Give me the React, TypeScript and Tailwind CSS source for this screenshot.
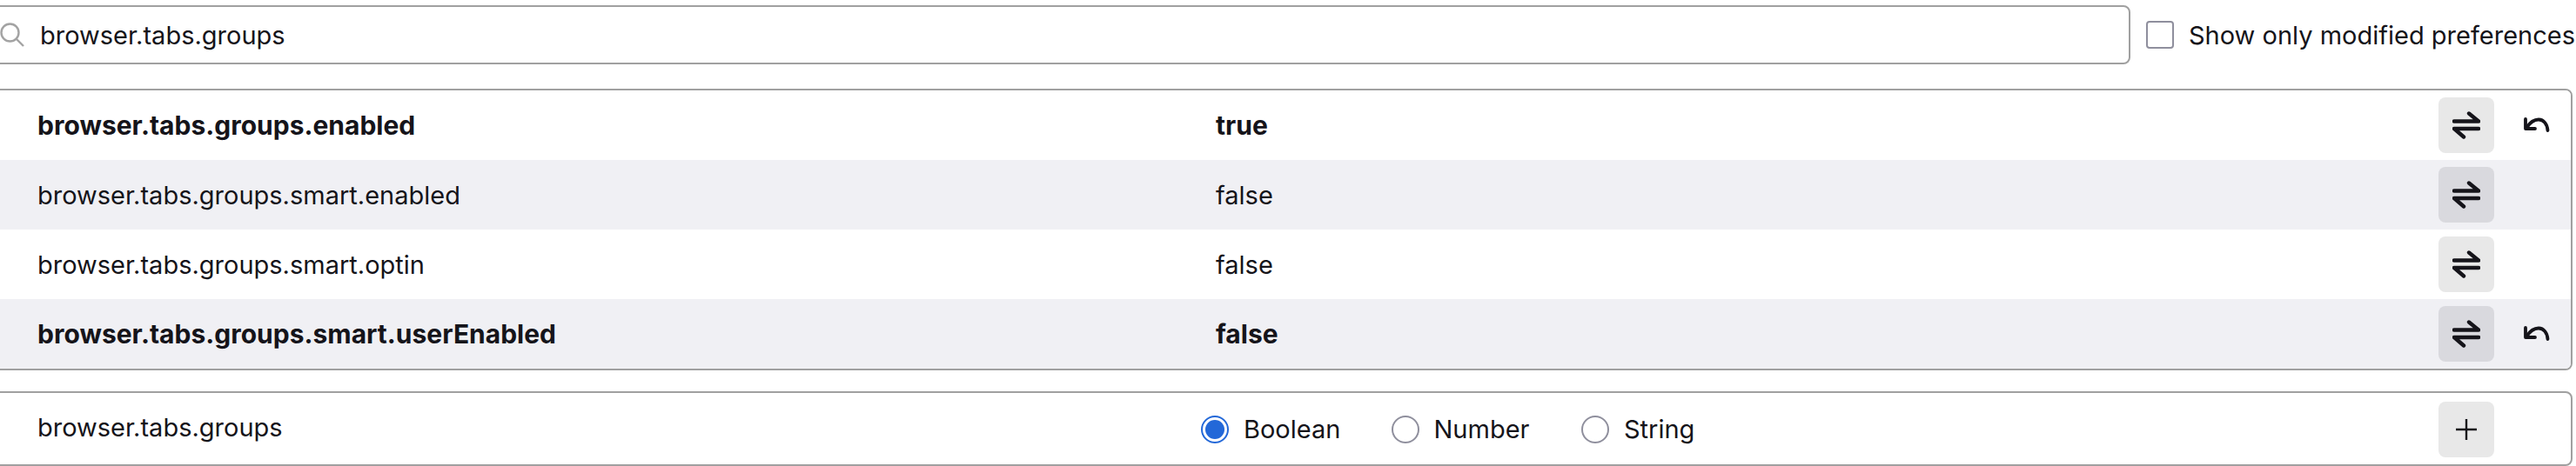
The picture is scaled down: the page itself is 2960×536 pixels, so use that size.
const rows = [
  { name: "browser.tabs.groups.enabled", value: "true", modified: true },
  { name: "browser.tabs.groups.smart.enabled", value: "false", modified: false },
  { name: "browser.tabs.groups.smart.optin", value: "false", modified: false },
  { name: "browser.tabs.groups.smart.userEnabled", value: "false", modified: true },
];

function SearchIcon() {
  return (
    <svg width="28" height="28" viewBox="0 0 28 28" fill="none" stroke="#a3a3a3" strokeWidth="2.4" className="shrink-0">
      <circle cx="11.5" cy="11.5" r="10" />
      <path d="M18.5 18.5L27 27" />
    </svg>
  );
}

function ToggleIcon() {
  return (
    <svg width="32" height="32" viewBox="0 0 32 32" fill="none" stroke="#15141a" strokeWidth="4.4" strokeLinecap="round" strokeLinejoin="round">
      <path d="M2 11.5H30L19 2.5" />
      <path d="M30 20H2L13 29.5" />
    </svg>
  );
}

function ResetIcon() {
  return (
    <svg width="32" height="22" viewBox="0 0 32 22" fill="none" stroke="#15141a" strokeWidth="3.8" strokeLinejoin="round" strokeLinecap="round">
      <path d="M3 4V15H14" />
      <path d="M4 14C8 8 13 4.500 18 4.500C24 4.500 28 10 28.500 17" />
    </svg>
  );
}

function PrefRow({ name, value, modified, alt }: { name: string; value: string; modified: boolean; alt: boolean }) {
  return (
    <div className={`flex h-[80px] items-center pl-[53px] ${alt ? "bg-[#f0f0f4]" : "bg-white"} ${modified ? "text-[30px] font-bold" : ""}`}>
      <div className="w-[1354px] shrink-0 pt-[1px]">{name}</div>
      <div className="flex-1 pt-[1px]">{value}</div>
      <button className={`flex h-16 w-16 items-center justify-center rounded-lg ${alt ? "bg-[#d9d9de]" : "bg-[#e8e8e8]"}`}>
        <ToggleIcon />
      </button>
      <div className="ml-[17px] mr-[7px] flex h-16 w-16 items-center justify-center">
        {modified && <ResetIcon />}
      </div>
    </div>
  );
}

function Radio({ label, checked }: { label: string; checked?: boolean }) {
  return (
    <label className="flex w-[218.500px] items-center gap-[17px]">
      <span className={`flex h-8 w-8 items-center justify-center rounded-full border-2 ${checked ? "border-[#2368d8]" : "border-[#8f8f9d]"}`}>
        {checked && <span className="h-[22px] w-[22px] rounded-full bg-[#2368d8]" />}
      </span>
      {label}
    </label>
  );
}

export default function App() {
  return (
    <div className="h-[536px] w-[2960px] overflow-hidden bg-white pt-[6px] text-[29px] text-[#15141a] [font-family:Inter,'Liberation_Sans',sans-serif]">
      <div className="-ml-[12px] w-[2968px]">
        <div className="flex items-center">
          <div className="flex h-[68px] w-[2460px] shrink-0 items-center gap-[18px] rounded-lg border-2 border-[#a0a0a0] pl-[10px]">
            <SearchIcon />
            <span className="pt-[1px]">browser.tabs.groups</span>
          </div>
          <span className="ml-[18px] h-8 w-8 shrink-0 rounded border-2 border-[#8f8f9d]" />
          <span className="ml-[17px] whitespace-nowrap pt-[1px]">Show only modified preferences</span>
        </div>

        <div className="mt-[28px] overflow-hidden rounded-lg border-2 border-[#a0a0a0]">
          {rows.map((r, i) => (
            <PrefRow key={r.name} name={r.name} value={r.value} modified={r.modified} alt={i % 2 === 1} />
          ))}
        </div>

        <div className="mt-[24px] flex items-start rounded-lg border-2 border-[#a0a0a0] pb-[8px] pl-[53px] pt-[10px]">
          <div className="flex h-[60px] w-[1337px] shrink-0 items-center">browser.tabs.groups</div>
          <div className="flex h-16 flex-1 items-center">
            <Radio label="Boolean" checked />
            <Radio label="Number" />
            <Radio label="String" />
          </div>
          <button className="flex h-16 w-16 items-center justify-center rounded-lg bg-[#e8e8e8]">
            <svg width="24" height="24" viewBox="0 0 24 24" fill="none" stroke="#15141a" strokeWidth="2.400">
              <path d="M12 0V24M0 12H24" />
            </svg>
          </button>
          <div className="ml-[17px] mr-[7px] h-16 w-16" />
        </div>
      </div>
    </div>
  );
}
